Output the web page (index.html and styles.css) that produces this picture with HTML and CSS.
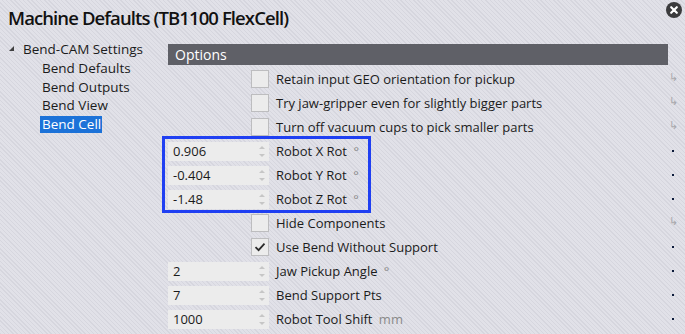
FILE: index.html
```html
<!DOCTYPE html>
<html lang="en">
<head>
    <meta charset="UTF-8">
    <meta name="viewport" content="width=device-width, initial-scale=1.0">
    <title>Machine Defaults</title>
    <link rel="stylesheet" href="styles.css">
</head>
<body>
    <div class="window">
        <header class="titlebar">
            <h1>Machine Defaults (TB1100 FlexCell)</h1>
            <button class="close" title="Close">
                <svg width="16" height="16" viewBox="0 0 16 16">
                    <circle cx="8" cy="8" r="8" fill="#3b3b3d"/>
                    <path d="M5.2 5.2 L10.8 10.8 M10.8 5.2 L5.2 10.8" stroke="#fff" stroke-width="2.2" stroke-linecap="round"/>
                </svg>
            </button>
        </header>

        <div class="content">
            <nav class="tree">
                <div class="tree-root"><span class="caret"></span>Bend-CAM Settings</div>
                <ul class="tree-children">
                    <li>Bend Defaults</li>
                    <li>Bend Outputs</li>
                    <li>Bend View</li>
                    <li><span class="selected">Bend Cell</span></li>
                </ul>
            </nav>

            <section class="options">
                <div class="options-head">Options</div>

                <div class="row">
                    <div class="cell"><span class="check"></span></div>
                    <div class="label">Retain input GEO orientation for pickup</div>
                    <div class="mark"><span class="inherit">&#8627;</span></div>
                </div>
                <div class="row">
                    <div class="cell"><span class="check"></span></div>
                    <div class="label">Try jaw-gripper even for slightly bigger parts</div>
                    <div class="mark"><span class="inherit">&#8627;</span></div>
                </div>
                <div class="row">
                    <div class="cell"><span class="check"></span></div>
                    <div class="label">Turn off vacuum cups to pick smaller parts</div>
                    <div class="mark"><span class="inherit">&#8627;</span></div>
                </div>

                <div class="group">
                    <div class="row">
                        <div class="cell"><div class="num">0.906<span class="spin"></span></div></div>
                        <div class="label">Robot X Rot <span class="unit">&deg;</span></div>
                        <div class="mark"><span class="dot"></span></div>
                    </div>
                    <div class="row">
                        <div class="cell"><div class="num">-0.404<span class="spin"></span></div></div>
                        <div class="label">Robot Y Rot <span class="unit">&deg;</span></div>
                        <div class="mark"><span class="dot"></span></div>
                    </div>
                    <div class="row">
                        <div class="cell"><div class="num">-1.48<span class="spin"></span></div></div>
                        <div class="label">Robot Z Rot <span class="unit">&deg;</span></div>
                        <div class="mark"><span class="dot"></span></div>
                    </div>
                </div>

                <div class="row">
                    <div class="cell"><span class="check"></span></div>
                    <div class="label">Hide Components</div>
                    <div class="mark"><span class="inherit">&#8627;</span></div>
                </div>
                <div class="row">
                    <div class="cell">
                        <span class="check">
                            <svg width="14" height="14" viewBox="0 0 14 14"><path d="M2.5 7.2 L5.6 10.2 L11.5 3.6" fill="none" stroke="#2b2b2b" stroke-width="1.8"/></svg>
                        </span>
                    </div>
                    <div class="label">Use Bend Without Support</div>
                    <div class="mark"><span class="dot"></span></div>
                </div>
                <div class="row">
                    <div class="cell"><div class="num">2<span class="spin"></span></div></div>
                    <div class="label">Jaw Pickup Angle <span class="unit">&deg;</span></div>
                    <div class="mark"><span class="dot"></span></div>
                </div>
                <div class="row">
                    <div class="cell"><div class="num">7<span class="spin"></span></div></div>
                    <div class="label">Bend Support Pts</div>
                    <div class="mark"><span class="dot"></span></div>
                </div>
                <div class="row">
                    <div class="cell"><div class="num">1000<span class="spin"></span></div></div>
                    <div class="label">Robot Tool Shift <span class="unit">mm</span></div>
                    <div class="mark"><span class="dot"></span></div>
                </div>
            </section>
        </div>
    </div>
</body>
</html>
```

FILE: styles.css
```css
body, html {
    margin: 0;
    padding: 0;
    font-family: "Open Sans", "Noto Sans", sans-serif;
    color: #1b1b1b;
}

.window {
    width: 685px;
    height: 334px;
    overflow: hidden;
    background-color: #dcdce3;
    background-image: repeating-linear-gradient(45deg, #d6d6de 0, #d6d6de 1px, #e1e1e8 1px, #e1e1e8 3px);
}

.titlebar {
    height: 40px;
    display: flex;
    align-items: flex-start;
    justify-content: space-between;
}

.titlebar h1 {
    margin: 0;
    padding: 3px 0 0 8px;
    font-family: "Open Sans", sans-serif;
    font-size: 18.5px;
    font-weight: 600;
    letter-spacing: -0.9px;
    line-height: 29px;
    color: #111;
}

.close {
    border: none;
    background: none;
    padding: 0;
    margin: 2px 3px 0 0;
    width: 16px;
    height: 16px;
    cursor: pointer;
}

.close svg {
    display: block;
}

.content {
    display: grid;
    grid-template-columns: 168px 517px;
}

/* tree on the left */
.tree {
    font-size: 13.5px;
}

.tree-root {
    height: 18px;
    line-height: 18px;
    padding-left: 23px;
    position: relative;
}

.caret {
    position: absolute;
    left: 9px;
    top: 6px;
    width: 0;
    height: 0;
    border-left: 5px solid transparent;
    border-bottom: 5px solid #404040;
}

.tree-children {
    list-style: none;
    margin: 1px 0 0 0;
    padding: 0 0 0 42px;
}

.tree-children li {
    height: 18.5px;
    line-height: 18.5px;
}

.selected {
    display: inline-block;
    line-height: 17px;
    margin-left: -2px;
    padding: 0 1px 0 2px;
    background-color: #1c72d8;
    color: #fff;
}

/* options panel */
.options {
    padding-top: 4px;
    font-size: 13px;
}

.options-head {
    width: 493px;
    height: 21px;
    line-height: 21px;
    padding-left: 7px;
    margin-bottom: 2px;
    background-color: #5f6067;
    color: #fff;
    font-size: 14px;
}

.row {
    display: grid;
    grid-template-columns: 101px 1fr 17px;
    column-gap: 7px;
    height: 24px;
    align-items: center;
}

.cell {
    display: flex;
    justify-content: flex-end;
}

.check {
    width: 16px;
    height: 16px;
    border: 1px solid #bdbdbf;
    background-color: #ececec;
    display: flex;
    align-items: center;
    justify-content: center;
}

.num {
    position: relative;
    width: 96px;
    height: 19px;
    line-height: 19px;
    padding-left: 5px;
    background-color: #ececec;
}

.spin {
    position: absolute;
    right: 4px;
    top: 4px;
    width: 0;
    height: 0;
    border-left: 3px solid transparent;
    border-right: 3px solid transparent;
    border-bottom: 3px solid #c6c6c6;
}

.spin::after {
    content: "";
    position: absolute;
    left: -3px;
    top: 8px;
    border-left: 3px solid transparent;
    border-right: 3px solid transparent;
    border-top: 3px solid #c6c6c6;
}

.label {
    white-space: nowrap;
}

.unit {
    margin-left: 3px;
    color: #8a8a8a;
}

.mark {
    position: relative;
    height: 24px;
}

.inherit {
    position: absolute;
    left: 1px;
    top: 2px;
    font-size: 11px;
    color: #a9a9ad;
}

.dot {
    position: absolute;
    left: 4px;
    top: 11px;
    width: 2px;
    height: 2px;
    background-color: #0b1a3a;
}

/* highlight box drawn around the rotation rows */
.group {
    position: relative;
}

.group::before {
    content: "";
    position: absolute;
    left: -6px;
    top: -3px;
    width: 203px;
    height: 71px;
    border: 3px solid #1f3ff2;
    pointer-events: none;
}
```
